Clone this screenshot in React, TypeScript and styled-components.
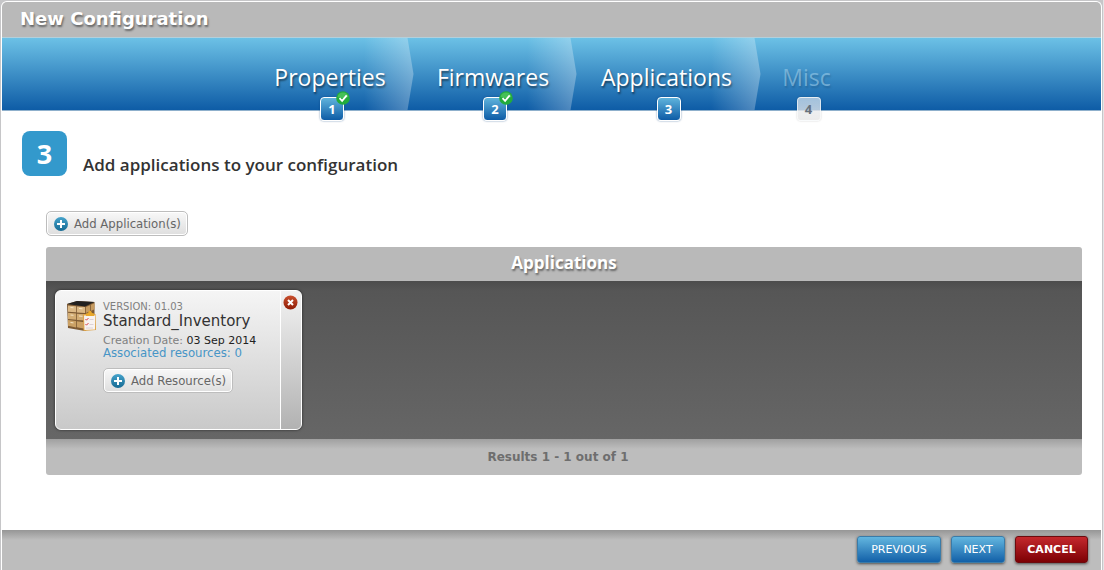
import React from "react";
import styled, { createGlobalStyle, css } from "styled-components";

const verdana = `Verdana, "DejaVu Sans", sans-serif`;
const tahoma = `Tahoma, "DejaVu Sans Condensed", "Noto Sans", sans-serif`;
const trebuchet = `"Trebuchet MS", "Open Sans", "Noto Sans", sans-serif`;

const GlobalStyle = createGlobalStyle`
  *, *::before, *::after { box-sizing: border-box; }
  body { margin: 0; background: #c6c6c8; font-family: ${verdana}; color: #333; }
  h1, h2, h3, p, ol { margin: 0; padding: 0; }
  button { font: inherit; cursor: pointer; }
`;

const Page = styled.div`
  display: flex;
  min-height: 100vh;
  padding: 1px 1px 0 1px;
  background: #c6c6c8;
  border-right: 1px solid #e4e4e6;
`;

const Dialog = styled.div`
  flex: 1;
  display: flex;
  flex-direction: column;
  border: 1px solid #fff;
  border-bottom: 0;
  border-radius: 6px 6px 0 0;
  background: #fff;
  overflow: hidden;
`;

const TitleBar = styled.header`
  height: 36px;
  padding: 0 18px;
  background: #b9b9b9;
  border-bottom: 1px solid #b3d0dc;
`;

const Title = styled.h1`
  font: 700 18px/34px ${verdana};
  color: #fff;
  text-shadow: 1px 2px 2px rgba(0, 0, 0, 0.45);
`;

const Steps = styled.ol`
  && {
    padding-left: 4px;
  }
  display: flex;
  justify-content: center;
  height: 73px;
  list-style: none;
  background: linear-gradient(#6cc1e6, #0e5ca6);
  border-bottom: 1px solid #8fb0cc;
`;

const Step = styled.li<{ $width: number; $passed: boolean }>`
  position: relative;
  min-width: ${(p) => p.$width}px;
  padding: 21px 4px 0 0;
  text-align: center;
  font: 400 23px/36px ${trebuchet};
  color: ${(p) => (p.$passed ? "#fff" : "rgba(150, 200, 230, 0.65)")};
  text-shadow: 1px 2px 2px rgba(0, 0, 0, ${(p) => (p.$passed ? 0.5 : 0.15)});

  ${(p) =>
    p.$passed &&
    css`
      &::after {
        content: "";
        position: absolute;
        top: 0;
        right: 0;
        width: 50px;
        height: 72px;
        background: linear-gradient(to right, rgba(255, 255, 255, 0), rgba(255, 255, 255, 0.3));
        clip-path: polygon(0 0, 44px 0, 100% 50%, 44px 100%, 0 100%);
      }
    `}
`;

const StepNumber = styled.span<{ $passed: boolean }>`
  position: absolute;
  left: 50%;
  bottom: -11px;
  z-index: 1;
  width: 24px;
  height: 24px;
  margin-left: -12px;
  border: 1px solid #fff;
  border-radius: 4px;
  font: 700 13px/22px ${trebuchet};
  color: #fff;
  background: linear-gradient(#5fb3dc, #0e5ca6);
  box-shadow: 0 0 2px rgba(0, 60, 120, 0.6);
  text-shadow: none;
  ${(p) =>
    !p.$passed &&
    css`
      color: #66727d;
      border-color: rgba(255, 255, 255, 0.6);
      background: linear-gradient(rgba(235, 240, 245, 0.65), rgba(232, 232, 232, 0.85));
      box-shadow: 0 0 2px rgba(0, 0, 0, 0.2);
    `}
`;

const DoneMark = styled.svg`
  position: absolute;
  top: -7px;
  right: -7px;
`;

const Content = styled.main`
  flex: 1;
  padding: 20px 19px 54px 20px;
`;

const Intro = styled.div`
  display: flex;
  align-items: flex-start;
  gap: 16px;
`;

const BigNumber = styled.span`
  width: 45px;
  height: 45px;
  border-radius: 8px;
  background: #3399cc;
  color: #fff;
  text-align: center;
  font: 700 27px/45px ${trebuchet};
`;

const IntroText = styled.h2`
  padding-top: 22px;
  font: 600 17px/24px ${trebuchet};
  color: #333;
`;

const Workspace = styled.section`
  padding: 34px 0 0 24px;
`;

const AddButton = styled.button`
  display: flex;
  align-items: center;
  gap: 5px;
  height: 25px;
  padding: 0 6px;
  border: 1px solid #bdbdbd;
  border-radius: 5px;
  background: linear-gradient(#f8f8f8, #dedede);
  box-shadow: inset 0 0 0 1px #fff;
  font: 400 13px/16px ${tahoma};
  color: #666;
  white-space: nowrap;
`;

const Panel = styled.div`
  margin-top: 11px;
  border-radius: 3px;
  overflow: hidden;
`;

const PanelTitle = styled.h2`
  height: 34px;
  background: #b9b9b9;
  color: #fff;
  text-align: center;
  font: 700 17px/32px ${trebuchet};
  text-shadow: 1px 2px 2px rgba(0, 0, 0, 0.45);
`;

const PanelBody = styled.div`
  display: flex;
  min-height: 158px;
  padding: 9px;
  background: linear-gradient(#4c4c4c, #565656 10px, #666);
`;

const PanelFooter = styled.p`
  height: 36px;
  && {
    padding-right: 12px;
  }
  background: linear-gradient(#a0a0a0, #bdbdbd 10px);
  text-align: center;
  font: 700 12px/36px ${verdana};
  color: #6e6e6e;
`;

const Card = styled.article`
  display: flex;
  width: 247px;
  height: 140px;
  border: 1px solid #fff;
  border-radius: 6px;
  overflow: hidden;
  background: linear-gradient(#f5f5f5, #c9c9c9);
  box-shadow: 0 0 3px rgba(0, 0, 0, 0.6);
`;

const CardMain = styled.div`
  flex: 1;
  display: flex;
  gap: 6px;
  padding: 9px 0 0 10px;
`;

const CardText = styled.div`
  display: flex;
  flex-direction: column;
  align-items: flex-start;
  font-size: 11px;
  line-height: 13px;
  color: #808080;
  white-space: nowrap;
`;

const Version = styled.p`
  font-size: 10px;
`;

const AppName = styled.h3`
  font: 400 15px/16px ${verdana};
  color: #333;
`;

const Created = styled.p`
  && {
    margin-top: 5px;
  }
`;

const CreatedDate = styled.time`
  color: #222;
`;

const ResourceLink = styled.a`
  font: 400 13px/12px ${tahoma};
  color: #4795c6;
  text-decoration: none;
`;

const ResourceAction = styled.div`
  margin-top: 9px;
`;

const CardSide = styled.div`
  width: 21px;
  padding: 4px 0 0 2px;
  border-left: 1px solid #fff;
  background: linear-gradient(#f2f2f2, #b2b2b2);
`;

const RemoveButton = styled.button`
  display: block;
  width: 15px;
  height: 15px;
  padding: 0;
  border: 0;
  background: none;

  svg {
    display: block;
  }
`;

const ActionBar = styled.footer`
  display: flex;
  justify-content: flex-end;
  gap: 10px;
  height: 40px;
  padding: 6px 13px 0 0;
  background: linear-gradient(#969696, #bdbdbd 10px);
`;

const ActionButton = styled.button<{ $width: number; $danger?: boolean }>`
  min-width: ${(p) => p.$width}px;
  height: 27px;
  padding: 0 10px;
  border: 1px solid ${(p) => (p.$danger ? "#6c0a0e" : "#3a7ba8")};
  border-radius: 3px;
  background: ${(p) =>
    p.$danger ? "linear-gradient(#c4282d, #7d0004)" : "linear-gradient(#63b6df, #1260a8)"};
  box-shadow: 0 1px 3px rgba(0, 0, 0, 0.6);
  font: ${(p) => (p.$danger ? 700 : 400)} 11px/25px ${verdana};
  color: #fff;
`;

const PlusIcon = () => (
  <svg width="16" height="16" viewBox="0 0 16 16" aria-hidden="true">
    <defs>
      <linearGradient id="plus" x1="0" y1="0" x2="0" y2="1">
        <stop offset="0" stopColor="#45a3cb" />
        <stop offset="1" stopColor="#166a93" />
      </linearGradient>
    </defs>
    <circle cx="8" cy="8" r="7" fill="url(#plus)" />
    <path d="M8 4v8M4 8h8" stroke="#fff" strokeWidth="2" />
  </svg>
);

const CheckIcon = () => (
  <DoneMark width="14" height="14" viewBox="0 0 14 14" role="img" aria-label="Completed">
    <circle cx="7" cy="7" r="6.8" fill="#22ab3c" />
    <path d="M1.5 6a5.6 5.6 0 0 1 11 0Q7 8 1.5 6Z" fill="#5fce69" opacity=".6" />
    <path d="M3.5 7.2l2.6 2.6 4.600-5.400" fill="none" stroke="#fff" strokeWidth="1.8" />
  </DoneMark>
);

const RemoveIcon = () => (
  <svg width="15" height="15" viewBox="0 0 15 15" aria-hidden="true">
    <defs>
      <linearGradient id="remove" x1="0" y1="0" x2="0" y2="1">
        <stop offset="0" stopColor="#c9502e" />
        <stop offset="1" stopColor="#8f1c05" />
      </linearGradient>
    </defs>
    <circle cx="7.5" cy="7.5" r="7" fill="url(#remove)" />
    <path d="M5 5l5 5M10 5l-5 5" stroke="#fff" strokeWidth="2" />
  </svg>
);

const InventoryIcon = () => (
  <svg width="31" height="32" viewBox="0 0 31 32" aria-hidden="true">
    <path d="M1 4L11 1l17.500 1v23L19 31 2 28Z" fill="#7d5a34" />
    <path d="M1 4L11 1l17.500 1L19 6.500Z" fill="#222120" />
    <path d="M2 5.500l8 .8v6L2 11.800zM10.800 6.400l8.200.6v6l-8.200-.6z" fill="#dcb985" />
    <path d="M2 12.800l8 .8v6.200L2 19zM10.800 13.700l8.200.6v6.200l-8.200-.6z" fill="#d3ad74" />
    <path d="M2 20l8 1v6.500l-8-1.700zM10.800 21.200l8.200 1v6.500l-8.200-1.500z" fill="#cba165" />
    <path d="M19.800 7L24 5.200v6l-4.200 1.800zM24.800 4.800l3.700-1.500v6L24.800 11z" fill="#c69b60" />
    <path d="M4.500 7.500l3 .3M13 8.500l3.500.3M4.500 15l3 .3M13 16l3.500.3M4.500 22.500l3 .4" stroke="#f6e6c8" />
    <path d="M17 14h12.500l.5 16-12.500 1z" fill="#dfa54a" />
    <path d="M18 15.500h11V29.500l-10.500.5z" fill="#f8f3f1" />
    <path d="M20 16v-2.500l2-.5 1-2h2l1 2 2 .5V16z" fill="#e8a82b" />
    <path d="M19.500 19l1 1.200 2-2.200M19.500 24l1 1.200 2-2.200" fill="none" stroke="#d8474a" />
    <path d="M23.500 19.500h4M23.500 24.500h4M20 28h7" stroke="#dcd2d6" />
  </svg>
);

const steps = [
  { label: "Properties", width: 163, passed: true, done: true },
  { label: "Firmwares", width: 163, passed: true, done: true },
  { label: "Applications", width: 184, passed: true, done: false },
  { label: "Misc", width: 96, passed: false, done: false },
];

export default function App() {
  return (
    <Page>
      <GlobalStyle />
      <Dialog>
        <TitleBar>
          <Title>New Configuration</Title>
        </TitleBar>
        <Steps>
          {steps.map((step, index) => (
            <Step key={step.label} $width={step.width} $passed={step.passed}>
              {step.label}
              <StepNumber $passed={step.passed}>
                {index + 1}
                {step.done && <CheckIcon />}
              </StepNumber>
            </Step>
          ))}
        </Steps>
        <Content>
          <Intro>
            <BigNumber>3</BigNumber>
            <IntroText>Add applications to your configuration</IntroText>
          </Intro>
          <Workspace>
            <AddButton type="button">
              <PlusIcon />
              Add Application(s)
            </AddButton>
            <Panel>
              <PanelTitle>Applications</PanelTitle>
              <PanelBody>
                <Card>
                  <CardMain>
                    <InventoryIcon />
                    <CardText>
                      <Version>VERSION: 01.03</Version>
                      <AppName>Standard_Inventory</AppName>
                      <Created>
                        Creation Date: <CreatedDate dateTime="2014-09-03">03 Sep 2014</CreatedDate>
                      </Created>
                      <ResourceLink href="#resources">Associated resources: 0</ResourceLink>
                      <ResourceAction>
                        <AddButton type="button">
                          <PlusIcon />
                          Add Resource(s)
                        </AddButton>
                      </ResourceAction>
                    </CardText>
                  </CardMain>
                  <CardSide>
                    <RemoveButton type="button" aria-label="Remove Standard_Inventory">
                      <RemoveIcon />
                    </RemoveButton>
                  </CardSide>
                </Card>
              </PanelBody>
              <PanelFooter>Results 1 - 1 out of 1</PanelFooter>
            </Panel>
          </Workspace>
        </Content>
        <ActionBar>
          <ActionButton type="button" $width={84}>
            PREVIOUS
          </ActionButton>
          <ActionButton type="button" $width={54}>
            NEXT
          </ActionButton>
          <ActionButton type="button" $width={73} $danger>
            CANCEL
          </ActionButton>
        </ActionBar>
      </Dialog>
    </Page>
  );
}
